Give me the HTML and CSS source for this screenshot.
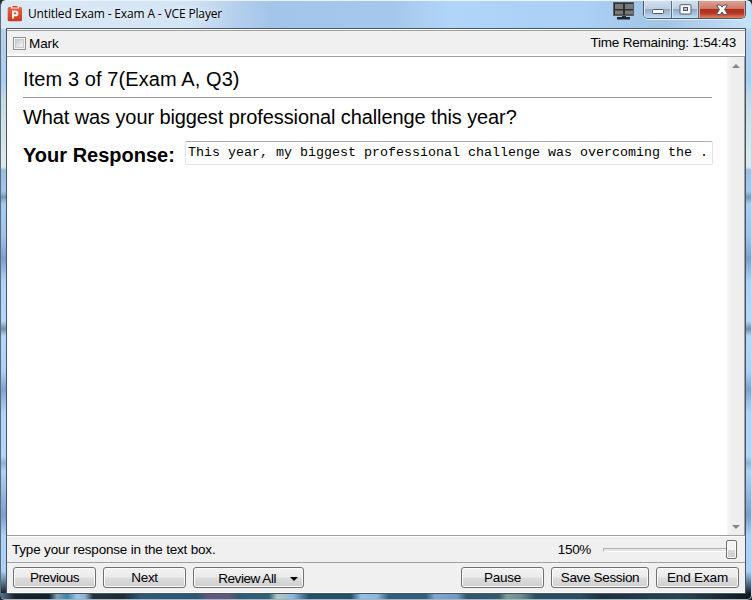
FILE: index.html
```html
<!DOCTYPE html>
<html lang="en">
<head>
<meta charset="utf-8">
<title>Untitled Exam - Exam A - VCE Player</title>
<link rel="stylesheet" href="styles.css">
</head>
<body>
<div class="window">
  <header class="titlebar">
    <svg class="app-icon" width="16" height="17" viewBox="0 0 16 17">
      <defs><linearGradient id="red" x2="0" y2="1"><stop stop-color="#ed6043"/><stop offset="1" stop-color="#c93820"/></linearGradient></defs>
      <rect x="0.700" y="2" width="14.300" height="14.300" rx="1.500" fill="url(#red)"/>
      <path d="M4 1.500h8v2h-8z" fill="#fbe4df"/><path d="M5.500 1h5v1.500h-5z" fill="#d4472e"/>
      <path d="M6 13.500V6.500h2.500a1.900 1.900 0 0 1 0 3.800H6" fill="none" stroke="#fff3ee" stroke-width="2"/>
    </svg>
    <span class="title">Untitled Exam - Exam A - VCE Player</span>
    <svg class="monitor" width="22" height="19" viewBox="0 0 22 19">
      <path d="M9 14h4v2h4v2.500H4V16h5z" fill="#25282b"/>
      <rect x="0.500" y="1.500" width="20" height="13" fill="#2b2d30" stroke="#595b5d"/>
      <path d="M2 3h8v5H2zM12 3h8v5h-8zM2 9.500h8v4H2zM12 9.500h8v4h-8z" fill="#77797a"/>
    </svg>
    <div class="controls">
      <div class="ctl min"><svg width="14" height="7" viewBox="0 0 14 7"><rect x="1.500" y="1.500" width="11" height="4" rx="1" fill="#fff" stroke="#535666"/></svg></div>
      <div class="ctl max"><svg width="13" height="11" viewBox="0 0 13 11"><rect x="1" y="0.700" width="11" height="9.300" rx="1" fill="#fff" stroke="#535666"/><rect x="4.500" y="3.500" width="4" height="3" fill="#a9c2df" stroke="#535666"/></svg></div>
      <div class="ctl close"><svg width="14" height="12" viewBox="0 0 14 12"><path d="M2 1h3.300l1.700 2.200L8.700 1H12v1L9.500 5.500l2.500 3.700v1.300H8.700L7 8l-1.700 2.500H2V9.200l2.500-3.700L2 2z" fill="#fff" stroke="#535666"/></svg></div>
    </div>
  </header>
  <main class="client">
    <div class="toolbar">
      <span class="check"><i></i></span><span class="mark">Mark</span>
      <span class="time">Time Remaining: 1:54:43</span>
    </div>
    <div class="content">
      <div class="page">
        <div class="item"><span class="t-item">Item 3 of 7(Exam A, Q3)</span></div>
        <div class="question"><span class="t-question">What was your biggest professional challenge this year?</span></div>
        <div class="answer">
          <span class="label">Your Response:</span>
          <div class="field">This year, my biggest professional challenge was overcoming the .</div>
        </div>
      </div>
      <div class="scroll">
        <svg width="8" height="4" viewBox="0 0 8 4"><path d="M0 4L4 0l4 4z" fill="#858585"/></svg>
        <svg width="8" height="4" viewBox="0 0 8 4"><path d="M0 0h8L4 4z" fill="#858585"/></svg>
      </div>
    </div>
    <div class="status">
      <span class="hint">Type your response in the text box.</span>
      <span class="zoom">150%</span>
      <div class="slider"><div class="track"></div><div class="thumb"></div></div>
    </div>
    <div class="buttons">
      <div class="btn"><span class="t-prev">Previous</span></div>
      <div class="btn"><span class="t-next">Next</span></div>
      <div class="btn review"><span class="t-review">Review All</span><svg width="8" height="4" viewBox="0 0 8 4"><path d="M0 0h8L4 4z"/></svg></div>
      <div class="btn pause"><span class="t-pause">Pause</span></div>
      <div class="btn save"><span class="t-save">Save Session</span></div>
      <div class="btn"><span class="t-end">End Exam</span></div>
    </div>
  </main>
</div>
</body>
</html>
```
FILE: styles.css
```css
* { box-sizing: border-box; }
body {
  margin: 0;
  background: #24292c;
  font: 13.5px/16px "Liberation Sans", sans-serif;
  color: #000;
}
span { white-space: nowrap; }
svg { display: block; flex: none; }
.window {
  width: 752px;
  height: 600px;
  padding: 0 5px 5px 5px;
  border: 1px solid #e8f3fb;
  border-left-color: #5b6d7c;
  border-right-color: #b9dcf0;
  border-bottom-color: #a9b4ba;
  border-radius: 6px 6px 5px 5px;
  background:
    linear-gradient(90deg, #53738c 0, #17222e 14px, #141e29 48px, #7fa0b0 56px, #3b86a8 66px, #9fc4ea 76px, #8fb3d6 84px, #25333f 92px, #1d2b36 122px, #2f5a78 140px, #2a5878 195px, #62577a 208px, #5d5a78 228px, #2d5b74 238px, #30607a 268px, #b0c8c8 276px, #8fb6de 292px, #24506c 308px, #24506c 350px, #8fc0ea 360px, #8fb6e0 376px, #2f5f7c 388px, #2f5f7c 425px, #7fa8d0 434px, #7399c0 456px, #31566c 466px, #345a6e 498px, #809c98 506px, #6c8c92 520px, #2a4c60 535px, #2a4c60 580px, #1c3040 600px, #284355 680px, #101820 745px) 0 592px / 100% 8px no-repeat,
    linear-gradient(90deg, #dbe9f6 0, #d3e4f5 25%, #b5d0ed 31%, #a3c5e9 36%, #a5c7eb 52%, #b1d5f8 60%, #abcff5 78%, #a2c4e6 88%, #c6e1f7) 0 0 / 100% 28px no-repeat,
    linear-gradient(180deg, #b8d2e9 28px, #a8cdf4 80px, #c5dce4 100px, #e0ebe9 166px, #9abde0 169px, #a5c9ed 190px, #7897b5 196px, #a8cdf3 203px, #a0c5eb 235px, #7c9fc9 258px, #aed3f8 280px, #b4d8fa 320px, #748ea7 328px, #b4d8fa 335px, #aed2f7 370px, #7fa3ce 388px, #b1d5f8 412px, #b2d6f9 455px, #90b3d5 462px, #afd3f7 470px, #7c9fca 515px, #aed2f7 535px, #aed2f7 570px, #17212b 592px);
}
.titlebar {
  height: 27px;
  display: flex;
  align-items: flex-start;
}
.app-icon { margin: 4px 0 0 1px; }
.title {
  margin: 5px 0 0 5px;
  font: 12px/16px "Open Sans", sans-serif;
  letter-spacing: -0.15px;
  text-shadow: 0 0 7px #fff;
}
.monitor { margin: 0 0 0 auto; }
.controls {
  height: 18px;
  margin: 0 0 0 8px;
  display: flex;
  border: 1px solid #49596a;
  border-top: 0;
  border-radius: 0 0 5px 5px;
  overflow: hidden;
  width: 103px;
  box-shadow: 0 1px 0 #e3f1fc;
}
.ctl {
  width: 28px;
  display: flex;
  justify-content: center;
  border-right: 1px solid #5c6b7c;
  background: linear-gradient(#d3e0ee, #bccede 47%, #92abc5 50%, #acc8e3 80%, #c1e0f5);
  box-shadow: inset 1px 0 #dce9f5, inset -1px 0 #c5d9ea;
}
.ctl.max { width: 27px; }
.ctl.close {
  width: 46px;
  border: 0;
  background: linear-gradient(#dfa294, #cb7866 47%, #b12e1b 50%, #b83525 72%, #dd8565);
  box-shadow: inset 1px 0 #df9e90, inset -1px 0 #d89885;
}
.min svg { margin-top: 7px; }
.max svg, .close svg { margin-top: 3px; }
.client {
  width: 740px;
  height: 566px;
  border: 1px solid #465668;
  background: #f0f0f0;
  display: flex;
  flex-direction: column;
}
.toolbar {
  height: 27px;
  flex: none;
  border-top: 1px solid #fff;
  display: flex;
  align-items: center;
  padding: 0 9px 0 6px;
  box-shadow: inset 0 1px #a0a0a0, inset 0 -2px #fff;
}
.check {
  width: 13px;
  height: 13px;
  padding: 2px;
  border: 1px solid #8e8f8f;
  background: #f4f4f4;
}
.check i {
  display: block;
  width: 7px;
  height: 7px;
  box-shadow: 0 0 0 1px #c8cbce;
  background: linear-gradient(135deg, #c5cad0, #f4f4f4);
}
.mark { margin: 1px 0 0 3px; letter-spacing: -0.1px; }
.time { margin-left: auto; letter-spacing: -0.21px; }
.content {
  height: 480px;
  flex: none;
  border: solid #a0a0a0;
  border-width: 1px 1px 1px 0;
  background: #fff;
  display: flex;
}
.page { width: 720px; padding: 10px 14px 0 16px; font-size: 20px; line-height: 24px; }
.item { height: 31px; border-bottom: 1px solid #999; width: 689px; }
.t-item { letter-spacing: 0.09px; }
.question { margin-top: 7px; }
.t-question { letter-spacing: -0.1px; }
.answer { display: flex; margin-top: 12px; }
.label { font-weight: bold; width: 162px; margin-top: 2px; }
.field {
  width: 528px;
  flex: none;
  height: 24px;
  border: 1px solid #e2e3ea;
  border-top-color: #abadb3;
  border-radius: 2px;
  padding: 0 2px;
  font: 13.333px/22px "Liberation Mono", monospace;
  white-space: nowrap;
}
.scroll {
  width: 17px;
  background: linear-gradient(90deg, #f6f6f6, #eee 5px);
  display: flex;
  flex-direction: column;
  justify-content: space-between;
  align-items: center;
  padding: 7px 0 6px;
}
.status {
  height: 27px;
  flex: none;
  display: flex;
  align-items: center;
  padding: 0 8px 0 5px;
  border-bottom: 1px solid #a0a0a0;
  border-top: 1px solid #fff;
}
.hint { letter-spacing: -0.19px; }
.zoom { margin-left: auto; letter-spacing: -0.35px; }
.slider { width: 134px; height: 19px; margin-left: 12px; display: flex; align-items: center; }
.track { width: 123px; height: 4px; border: 1px solid #b0b0b0; border-right: 0; border-bottom-color: #fff; background: #e7e7e7; }
.thumb { width: 11px; height: 19px; border: 1px solid #707070; border-radius: 2px; background: linear-gradient(#f4f4f4 50%, #d8d8d8 52%, #cfcfcf); box-shadow: inset 0 0 0 1px #fbfbfb; }
.buttons { flex: 1; display: flex; padding: 4px 6px 0 6px; gap: 7px; border-bottom: 1px solid #fff; }
.btn {
  width: 83px;
  height: 21px;
  border: 1px solid #707070;
  border-radius: 3px;
  background: linear-gradient(#f3f3f3, #ebebeb 48%, #dcdcdc 52%, #cfcfcf);
  box-shadow: inset 0 0 0 1px #fbfbfb;
  display: flex;
  justify-content: center;
  line-height: 19px;
}
.t-prev { letter-spacing: -0.42px; }
.t-next { letter-spacing: -0.3px; }
.t-review { letter-spacing: -0.45px; }
.t-pause { letter-spacing: -0.28px; }
.t-save { letter-spacing: -0.33px; }
.t-end { letter-spacing: -0.15px; }
.review { width: 111px; align-items: center; justify-content: flex-end; padding-right: 5px; }
.review span { margin: 2px 14px 0 0; }
.review svg { margin-top: 2px; }
.pause { margin-left: auto; }
.save { width: 98px; }
```
